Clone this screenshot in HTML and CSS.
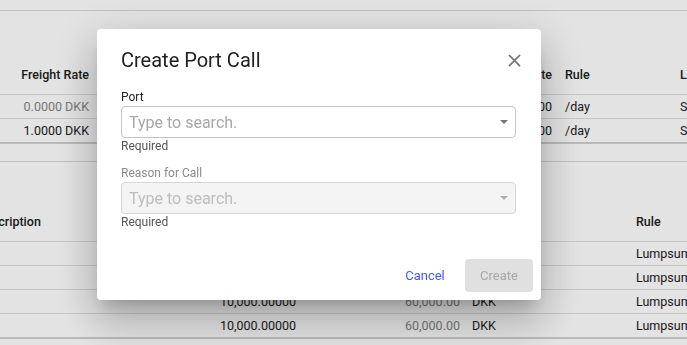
FILE: index.html
```html
<!DOCTYPE html>
<html lang="en">
<head>
  <meta charset="UTF-8">
  <meta name="viewport" content="width=device-width, initial-scale=1.0">
  <title>Create Port Call</title>
  <link rel="stylesheet" href="styles.css">
</head>
<body>
  <div class="page">
    <div class="divider"></div>

    <div class="grid grid-rates">
      <div class="row head">
        <div class="c-fr">Freight Rate</div>
        <div class="c-mid">Demurrage Rate</div>
        <div class="c-rule">Rule</div>
        <div class="c-loc">L</div>
      </div>
      <div class="row">
        <div class="c-fr muted">0.0000 DKK</div>
        <div class="c-mid">1,000.00</div>
        <div class="c-rule">/day</div>
        <div class="c-loc">S</div>
      </div>
      <div class="row last">
        <div class="c-fr">1.0000 DKK</div>
        <div class="c-mid">1,000.00</div>
        <div class="c-rule">/day</div>
        <div class="c-loc">S</div>
      </div>
    </div>

    <div class="divider gap"></div>

    <div class="grid grid-costs">
      <div class="row head">
        <div class="c-desc">Description</div>
        <div class="c-qty"></div>
        <div class="c-amt"></div>
        <div class="c-cur"></div>
        <div class="c-rule2">Rule</div>
      </div>
      <div class="row">
        <div class="c-desc"></div>
        <div class="c-qty">10,000.00000</div>
        <div class="c-amt muted">60,000.00</div>
        <div class="c-cur">DKK</div>
        <div class="c-rule2">Lumpsum</div>
      </div>
      <div class="row">
        <div class="c-desc"></div>
        <div class="c-qty">10,000.00000</div>
        <div class="c-amt muted">60,000.00</div>
        <div class="c-cur">DKK</div>
        <div class="c-rule2">Lumpsum</div>
      </div>
      <div class="row">
        <div class="c-desc"></div>
        <div class="c-qty">10,000.00000</div>
        <div class="c-amt muted">60,000.00</div>
        <div class="c-cur">DKK</div>
        <div class="c-rule2">Lumpsum</div>
      </div>
      <div class="row last">
        <div class="c-desc"></div>
        <div class="c-qty">10,000.00000</div>
        <div class="c-amt muted">60,000.00</div>
        <div class="c-cur">DKK</div>
        <div class="c-rule2">Lumpsum</div>
      </div>
    </div>
  </div>

  <div class="backdrop">
    <div class="dialog">
      <div class="dialog-title">
        <h2>Create Port Call</h2>
        <button class="close" aria-label="Close">
          <svg width="21" height="21" viewBox="0 0 24 24"><path d="M19 6.41L17.59 5 12 10.59 6.41 5 5 6.41 10.59 12 5 17.59 6.41 19 12 13.41 17.59 19 19 17.59 13.41 12z" fill="currentColor"/></svg>
        </button>
      </div>

      <div class="dialog-body">
        <div class="field">
          <label>Port</label>
          <div class="select">
            <span class="placeholder">Type to search.</span>
            <span class="arrow"></span>
          </div>
          <div class="hint">Required</div>
        </div>

        <div class="field disabled">
          <label>Reason for Call</label>
          <div class="select">
            <span class="placeholder">Type to search.</span>
            <span class="arrow"></span>
          </div>
          <div class="hint">Required</div>
        </div>
      </div>

      <div class="dialog-actions">
        <button class="btn-text">Cancel</button>
        <button class="btn-create" disabled>Create</button>
      </div>
    </div>
  </div>
</body>
</html>
```

FILE: styles.css
```css
html, body { margin: 0; height: 100%; }
body { font-family: Roboto, "Liberation Sans", sans-serif; background: #fff; color: #212121; overflow: hidden; }

.page { padding-top: 10px; font-size: 12.5px; }
.divider { height: 1px; background: #dadada; }
.divider.gap { margin-top: 17px; }

.grid-rates { margin-top: 43px; }
.grid-costs { margin-top: 39px; margin-left: -23px; }

.row { display: flex; align-items: center; height: 23px; border-bottom: 1px solid #e0e0e0; white-space: nowrap; }
.row > div { box-sizing: border-box; overflow: hidden; }
.row.head { height: 40px; font-weight: 500; }
.row.last { border-bottom: 2px solid #d0d0d0; }
.muted { color: #868686; }

.c-fr { width: 89px; text-align: right; }
.c-mid { width: 463px; text-align: right; }
.c-rule { width: 128px; padding-left: 13px; }
.c-loc { flex: 1; }

.c-desc { width: 243px; }
.c-qty { width: 150px; }
.c-amt { width: 90px; text-align: right; }
.c-cur { width: 176px; padding-left: 12px; }
.c-rule2 { flex: 1; }

.backdrop { position: fixed; inset: 0; background: rgba(0, 0, 0, 0.11); }
.dialog {
  position: absolute; left: 97px; top: 29px; width: 444px;
  background: #fff; border-radius: 4px;
  box-shadow: 0 11px 15px -7px rgba(0,0,0,.2), 0 24px 38px 3px rgba(0,0,0,.14), 0 9px 46px 8px rgba(0,0,0,.12);
}

.dialog-title { display: flex; align-items: center; justify-content: space-between; padding: 15px 16px 0 24px; }
.dialog-title h2 { margin: 0; font-size: 20px; font-weight: 400; line-height: 32px; color: #212121; }
.close { border: 0; background: none; padding: 0; color: #757575; display: flex; width: 21px; height: 21px; }

.dialog-body { padding: 13px 25px 21px 24px; }
.field + .field { margin-top: 11px; }
.field label { display: block; font-size: 12px; line-height: 16px; color: #212121; margin-bottom: 1px; }
.select {
  display: flex; align-items: center; justify-content: space-between;
  height: 30px; border: 1px solid #c4c4c4; border-radius: 4px; padding: 0 7px;
}
.placeholder { font-size: 16px; color: #a8a8a8; }
.arrow { width: 0; height: 0; border-left: 4.5px solid transparent; border-right: 4.5px solid transparent; border-top: 4.5px solid #757575; }
.hint { font-size: 12px; line-height: 16px; color: #555; }

.field.disabled label { color: #8a8a8a; }
.field.disabled .select { background: #f4f4f4; border-color: #d6d6d6; }
.field.disabled .placeholder { color: #bdbdbd; }
.field.disabled .arrow { border-top-color: #b0b0b0; }

.dialog-actions { display: flex; justify-content: flex-end; align-items: center; gap: 8px; padding: 8px; }
.dialog-actions button { font-family: inherit; font-size: 13px; border: 0; border-radius: 4px; height: 33px; min-width: 64px; padding: 0 8px; }
.btn-text { background: none; color: #3d5afe; }
.btn-create { background: #e0e0e0; color: #a6a6a6; width: 68px; }
```
